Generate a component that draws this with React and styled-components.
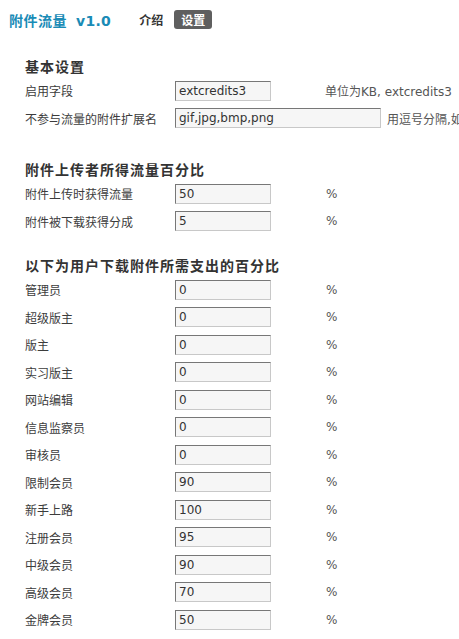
import styled, { createGlobalStyle } from "styled-components";

const GlobalStyle = createGlobalStyle`
  html, body {
    margin: 0;
    padding: 0;
    background: #fff;
    overflow: hidden;
  }
  body {
    font-family: "DejaVu Sans", "Noto Sans CJK SC", sans-serif;
    font-size: 12px;
    color: #444;
  }
`;

const Page = styled.div`
  width: 459px;
  overflow: hidden;
`;

const Header = styled.header`
  display: flex;
  align-items: center;
  height: 19px;
  padding: 10px 9px;
`;

const Title = styled.h1`
  margin: 0;
  font-size: 14px;
  font-weight: bold;
  letter-spacing: 0.5px;
  color: #1a8bb6;
  white-space: nowrap;
`;

const Version = styled.span`
  margin-left: 9px;
  letter-spacing: 0.3px;
`;

const Tab = styled.a`
  display: flex;
  align-items: center;
  height: 19px;
  padding: 0 ${(p) => (p.$active ? "7px" : "0")};
  margin-left: ${(p) => (p.$active ? "11px" : "28px")};
  border-radius: 3px;
  font-size: 12px;
  font-weight: bold;
  background: ${(p) => (p.$active ? "#5f5f5f" : "transparent")};
  color: ${(p) => (p.$active ? "#fff" : "#333")};
  cursor: pointer;
`;

const Section = styled.section`
  padding-left: 25px;
  margin-top: ${(p) => p.$top}px;
`;

const Heading = styled.h2`
  margin: 0;
  height: 20px;
  line-height: 20px;
  font-size: 14px;
  font-weight: bold;
  letter-spacing: 1px;
  color: #333;
  white-space: nowrap;
`;

const Row = styled.div`
  display: flex;
  align-items: center;
  height: 27.5px;
  white-space: nowrap;
`;

const Label = styled.label`
  width: 150px;
  flex: none;
  color: #3c3c3c;
`;

const Cell = styled.div`
  min-width: 150px;
  flex: none;
  padding-right: 6px;
  box-sizing: border-box;
`;

const Input = styled.input`
  display: block;
  box-sizing: border-box;
  width: ${(p) => p.$w || 96}px;
  height: 20px;
  margin: 0;
  padding: 0 3px;
  border: 1px solid;
  border-color: #777 #c8c8c8 #c8c8c8 #777;
  background: #f6f6f6;
  font-family: "DejaVu Sans", "Noto Sans CJK SC", sans-serif;
  font-size: 12px;
  color: #333;
  outline: none;
`;

const Hint = styled.span`
  color: #555;
  font-size: 12px;
`;

const Unit = styled.span`
  padding-left: 1px;
  color: #555;
  font-size: 12px;
`;

const upload = [
  { label: "附件上传时获得流量", value: "50" },
  { label: "附件被下载获得分成", value: "5" },
];

const groups = [
  { label: "管理员", value: "0" },
  { label: "超级版主", value: "0" },
  { label: "版主", value: "0" },
  { label: "实习版主", value: "0" },
  { label: "网站编辑", value: "0" },
  { label: "信息监察员", value: "0" },
  { label: "审核员", value: "0" },
  { label: "限制会员", value: "90" },
  { label: "新手上路", value: "100" },
  { label: "注册会员", value: "95" },
  { label: "中级会员", value: "90" },
  { label: "高级会员", value: "70" },
  { label: "金牌会员", value: "50" },
];

function PercentRow({ label, value }) {
  return (
    <Row>
      <Label>{label}</Label>
      <Cell>
        <Input defaultValue={value} />
      </Cell>
      <Unit>%</Unit>
    </Row>
  );
}

export default function App() {
  return (
    <Page>
      <GlobalStyle />
      <Header>
        <Title>
          附件流量<Version>v1.0</Version>
        </Title>
        <Tab>介绍</Tab>
        <Tab $active>设置</Tab>
      </Header>

      <Section $top={18}>
        <Heading>基本设置</Heading>
        <Row>
          <Label>启用字段</Label>
          <Cell>
            <Input defaultValue="extcredits3" />
          </Cell>
          <Hint>单位为KB, extcredits3</Hint>
        </Row>
        <Row>
          <Label>不参与流量的附件扩展名</Label>
          <Cell>
            <Input $w={206} defaultValue="gif,jpg,bmp,png" />
          </Cell>
          <Hint>用逗号分隔,如</Hint>
        </Row>
      </Section>

      <Section $top={28}>
        <Heading>附件上传者所得流量百分比</Heading>
        {upload.map((r) => (
          <PercentRow key={r.label} {...r} />
        ))}
      </Section>

      <Section $top={21}>
        <Heading>以下为用户下载附件所需支出的百分比</Heading>
        {groups.map((r) => (
          <PercentRow key={r.label} {...r} />
        ))}
      </Section>
    </Page>
  );
}
